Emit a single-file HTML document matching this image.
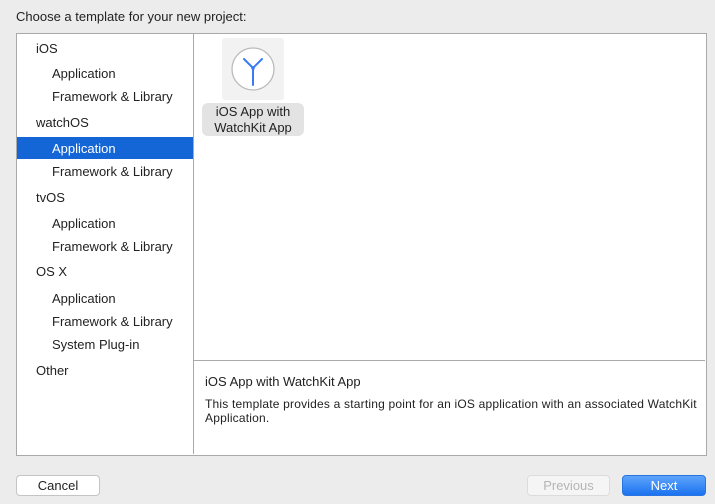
<!DOCTYPE html>
<html><head><style>
body{margin:0;width:715px;height:504px;background:#ececec;font-family:"Liberation Sans",sans-serif;color:#222;position:relative;overflow:hidden}
.a{position:absolute;white-space:nowrap}
.t{font-size:13px}
.box{position:absolute;left:16px;top:33px;width:689px;height:421px;border:1px solid #a9a9a9;background:#fff}
.btn{position:absolute;height:20px;border-radius:4px;font-size:13px;text-align:center;line-height:20px;box-sizing:border-box;height:21px}
</style></head><body>
<div class="a t" style="left:16px;top:9px">Choose a template for your new project:</div>
<div class="box"></div>
<div class="a" style="left:193px;top:34px;width:1px;height:420px;background:#a9a9a9"></div>
<div class="a" style="left:194px;top:360px;width:511px;height:1px;background:#a9a9a9"></div>
<div class="a" style="left:17px;top:137px;width:176px;height:22px;background:#1465d6"></div>
<div class="a t" style="left:36px;top:41px">iOS</div>
<div class="a t" style="left:52px;top:66px">Application</div>
<div class="a t" style="left:52px;top:89px">Framework &amp; Library</div>
<div class="a t" style="left:36px;top:115px">watchOS</div>
<div class="a t" style="left:52px;top:141px;color:#fff">Application</div>
<div class="a t" style="left:52px;top:164px">Framework &amp; Library</div>
<div class="a t" style="left:36px;top:190px">tvOS</div>
<div class="a t" style="left:52px;top:216px">Application</div>
<div class="a t" style="left:52px;top:239px">Framework &amp; Library</div>
<div class="a t" style="left:36px;top:264px">OS X</div>
<div class="a t" style="left:52px;top:291px">Application</div>
<div class="a t" style="left:52px;top:314px">Framework &amp; Library</div>
<div class="a t" style="left:52px;top:337px">System Plug-in</div>
<div class="a t" style="left:36px;top:363px">Other</div>
<div class="a" style="left:222px;top:38px;width:62px;height:62px;background:#f2f2f2;border-radius:3px"></div>
<svg class="a" style="left:222px;top:38px" width="62" height="62"><circle cx="31" cy="31" r="21" fill="#fff" stroke="#bbb" stroke-width="1.3"/><path d="M31 30V47M31 30L22 21M31 30L40 21" stroke="#3a7af2" stroke-width="2" fill="none" stroke-linecap="round"/><circle cx="31" cy="30" r="1.8" fill="#3a7af2"/></svg>
<div class="a t" style="left:202px;top:103px;width:102px;height:33px;background:#e3e3e3;border-radius:6px;text-align:center;line-height:16px;padding-top:1px;box-sizing:border-box">iOS App with<br>WatchKit App</div>
<div class="a" style="left:205px;top:374px;font-size:13px">iOS App with WatchKit App</div>
<div class="a" style="left:205px;top:397px;font-size:12px;line-height:14px;letter-spacing:0.2px">This template provides a starting point for an iOS application with an associated WatchKit<br>Application.</div>
<div class="btn a" style="left:16px;top:475px;width:84px;background:#fff;border:1px solid #c4c4c4">Cancel</div>
<div class="btn a" style="left:527px;top:475px;width:83px;background:#f5f5f5;border:1px solid #dcdcdc;color:#b5b5b5">Previous</div>
<div class="btn a" style="left:622px;top:475px;width:84px;background:linear-gradient(#5ea4fb,#1b72f0);border:1px solid #2a74e0;color:#fff">Next</div>
</body></html>
